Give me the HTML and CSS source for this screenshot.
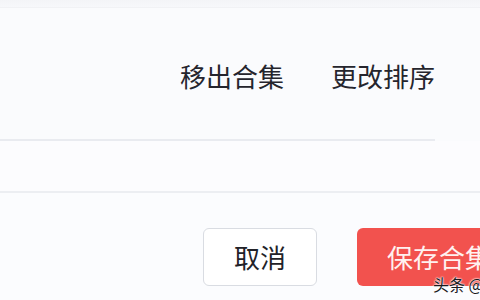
FILE: index.html
```html
<!DOCTYPE html>
<html lang="zh">
<head>
<meta charset="utf-8">
<link rel="stylesheet" href="styles.css">
</head>
<body>
<div class="page">
  <div class="topbar"></div>
  <div class="card">
    <div class="actions">
      <span class="action">移出合集</span>
      <span class="action">更改排序</span>
    </div>
    <div class="card-line"></div>
  </div>
  <div class="spacer"></div>
  <div class="footer">
    <button class="btn btn-cancel">取消</button>
    <button class="btn btn-save">保存合集</button>
  </div>
  <div class="watermark">头条 @</div>
</div>
</body>
</html>
```
FILE: styles.css
```css
html, body {
  margin: 0;
  padding: 0;
}
body {
  width: 480px;
  height: 300px;
  overflow: hidden;
  background: #fbfcfe;
  font-family: "Noto Sans CJK SC", "Noto Sans", sans-serif;
}
.page {
  position: relative;
  width: 480px;
  height: 300px;
  display: flex;
  flex-direction: column;
}
.topbar {
  height: 7px;
  background: linear-gradient(#f3f4f7, #f7f8fb);
  border-bottom: 1px solid #f1f2f5;
}
.card {
  height: 133px;
  background: #fafbfd;
  display: flex;
  flex-direction: column;
}
.actions {
  flex: 1;
  width: 435px;
  display: flex;
  align-items: center;
  justify-content: flex-end;
  gap: 47px;
  padding-top: 4px;
  box-sizing: border-box;
}
.action {
  font-size: 26px;
  line-height: 30px;
  color: #25252d;
}
.card-line {
  width: 435px;
  height: 2px;
  background: #e9ebf0;
}
.spacer {
  height: 50px;
  border-bottom: 2px solid #eceef2;
  background: #fcfcfe;
}
.footer {
  display: flex;
  gap: 40px;
  padding-top: 35px;
  padding-left: 203px;
}
.btn {
  flex: none;
  height: 58px;
  border-radius: 6px;
  font-family: "Noto Sans CJK SC", "Noto Sans", sans-serif;
  font-size: 26px;
  line-height: 30px;
  padding: 0 30px;
  cursor: pointer;
}
.btn-cancel {
  width: 114px;
  background: #ffffff;
  border: 1px solid #d9dce2;
  color: #222228;
}
.btn-save {
  width: 170px;
  background: #f2524e;
  border: none;
  color: #fff1f0;
  text-align: left;
}
.watermark {
  position: absolute;
  left: 433px;
  top: 275px;
  font-size: 16px;
  line-height: 18px;
  color: #1a1a1e;
  text-shadow: 0 0 2px #fff, 0 0 2px #fff, 0 0 1px #fff;
  white-space: nowrap;
}
```
